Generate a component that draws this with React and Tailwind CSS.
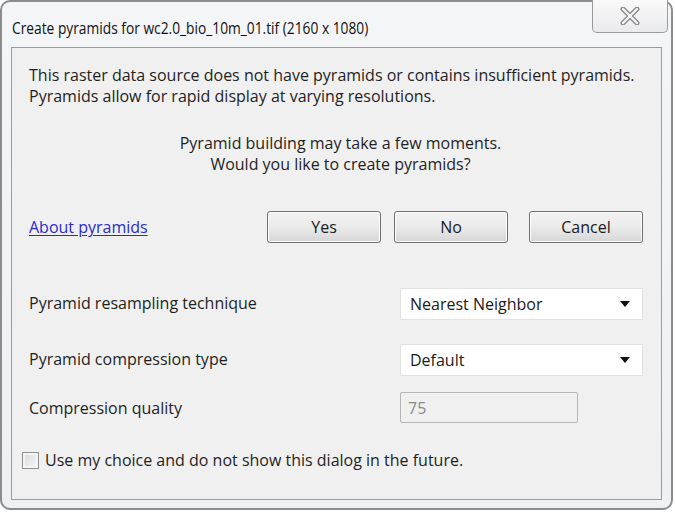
import React from 'react';

function Button({ children, className = '' }) {
  return (
    <div
      className={`h-[32px] flex items-center justify-center rounded-[3px] border border-[#707070] bg-gradient-to-b from-[#f2f2f2] via-[#ebebeb] to-[#d6d6d6] shadow-[inset_0_0_0_1px_#fcfcfc] text-[16px] text-[#1a1a1a] ${className}`}
    >
      {children}
    </div>
  );
}

function Select({ value }) {
  return (
    <div className="w-[243px] h-[32px] bg-white border border-[#e2e2e2] flex items-center justify-between pl-[9px] pr-[12px] text-[16px] text-[#1a1a1a]">
      <span>{value}</span>
      <svg width="10" height="6" viewBox="0 0 10 6">
        <path d="M0 0 L10 0 L5 6 Z" fill="#111" />
      </svg>
    </div>
  );
}

export default function App() {
  return (
    <div
      className="w-[675px] h-[512px] bg-white overflow-hidden"
      style={{ fontFamily: '"Open Sans", "Noto Sans", sans-serif' }}
    >
      <div className="relative w-[673px] h-[510px] bg-gradient-to-b from-[#f4f5f7] to-[#eef0f2] border-2 border-[#8c8c8c] rounded-[10px] flex flex-col">
        {/* title bar */}
        <div className="h-[45px] flex items-center pt-[7px] pl-[10px] text-[17px] text-[#111]">
          <span className="inline-block origin-left scale-x-[0.81] whitespace-nowrap">
            Create pyramids for wc2.0_bio_10m_01.tif (2160 x 1080)
          </span>
        </div>
        <div className="absolute right-[3px] top-[-2px] w-[76px] h-[33px] rounded-b-[5px] border border-[#9a9a9a] border-t-0 bg-gradient-to-b from-[#fafafa] to-[#e9eaec] flex items-center justify-center">
          <svg width="22" height="18" viewBox="0 0 22 18">
            <path
              d="M4 2 L18 16 M18 2 L4 16"
              stroke="#8a8a8a"
              strokeWidth="5"
              strokeLinecap="round"
            />
            <path
              d="M4 2 L18 16 M18 2 L4 16"
              stroke="#f4f4f4"
              strokeWidth="2.4"
              strokeLinecap="round"
            />
          </svg>
        </div>

        {/* content panel */}
        <div className="mx-[9px] flex-1 mb-[8px] border border-[#9b9b9b] bg-[#f0f0f0] flex flex-col text-[16px] text-[#1f1f1f]">
          <div className="pl-[17px] pt-[17px] leading-[21px]">
            <p>This raster data source does not have pyramids or contains insufficient pyramids.</p>
            <p>Pyramids allow for rapid display at varying resolutions.</p>
          </div>
          <div className="pt-[26px] leading-[21px] text-center pl-[8px]">
            <p>Pyramid building may take a few moments.</p>
            <p>Would you like to create pyramids?</p>
          </div>
          <div className="mt-[36px] flex items-center pl-[17px]">
            <span className="w-[238px] text-[#2a2ad0] underline underline-offset-2">About pyramids</span>
            <Button className="w-[114px]">Yes</Button>
            <Button className="w-[114px] ml-[13px]">No</Button>
            <Button className="w-[114px] ml-[21px]">Cancel</Button>
          </div>
          <div className="mt-[45px] flex flex-col gap-[24px] pl-[17px]">
            <div className="flex items-center">
              <span className="w-[371px] -mt-[3px]">Pyramid resampling technique</span>
              <Select value="Nearest Neighbor" />
            </div>
            <div className="flex items-center">
              <span className="w-[371px] -mt-[3px]">Pyramid compression type</span>
              <Select value="Default" />
            </div>
            <div className="flex items-center -mt-[8px]">
              <span className="w-[371px]">Compression quality</span>
              <div className="w-[178px] h-[31px] border border-[#b5b5b5] rounded-[2px] bg-[#f0f0f0] flex items-center pl-[7px] text-[#8a8a8a]">
                75
              </div>
            </div>
          </div>
          <div className="mt-[25px] flex items-center pl-[10px]">
            <div className="w-[17px] h-[17px] border border-[#8f8f8f] bg-gradient-to-br from-[#dcdcdc] to-[#f6f6f6] shadow-[inset_0_0_0_2px_#f4f4f4] mr-[6px]" />
            <span>Use my choice and do not show this dialog in the future.</span>
          </div>
        </div>
      </div>
    </div>
  );
}
